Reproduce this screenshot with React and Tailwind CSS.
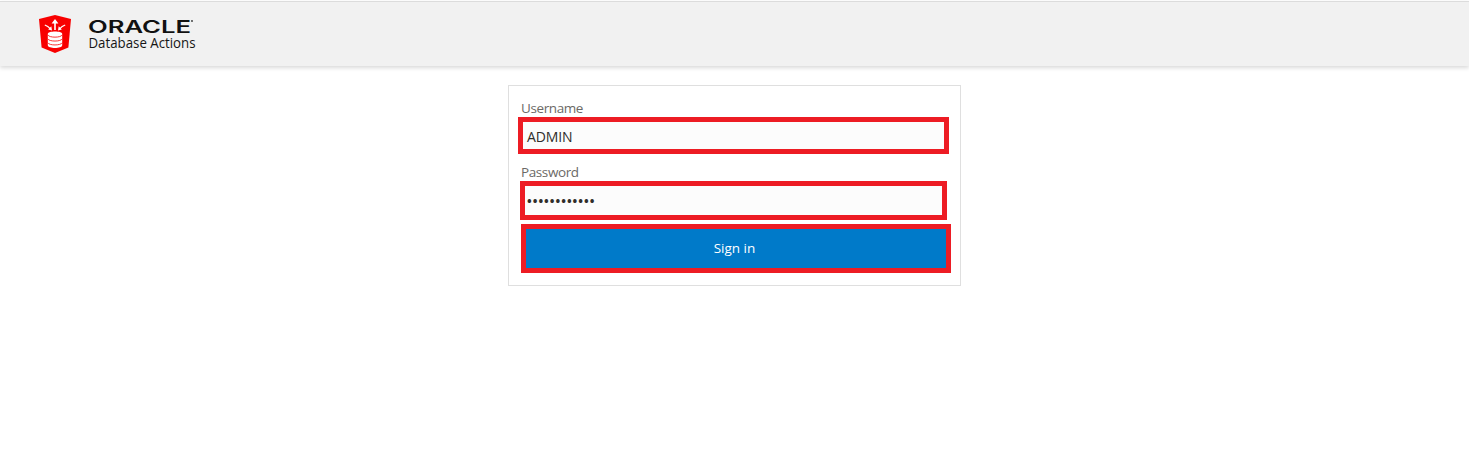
function ShieldLogo() {
  return (
    <svg className="h-10 w-8 shrink-0" viewBox="0 0 32 40" aria-hidden="true">
      <path d="M16 1 L32 5 L29.4 33.6 L16 39 L2.6 33.6 L0 5 Z" fill="#f80000" />
      <g fill="none" stroke="#fff">
        <path d="M16 16 V8" strokeWidth="1.6" />
        <path d="M5.8 11 Q9 12.2 11.4 14.8 M26.2 11 Q23 12.2 20.6 14.8" strokeWidth="1.2" />
      </g>
      <path d="M12.6 9.6 L16 5 L19.4 9.6 Z M13 16.4 L9.2 15.6 L12.3 12.2 Z M19 16.4 L22.8 15.6 L19.7 12.2 Z" fill="#fff" />
      <path d="M8.8 20 C8.8 16.8 23.2 16.8 23.2 20 V31.2 C23.2 34.8 8.8 34.8 8.8 31.2 Z" fill="#fff" />
      <path
        d="M8.8 20.9 C10 23.9 22 23.9 23.2 20.9 M8.8 24.8 C10 27.8 22 27.8 23.2 24.8 M8.8 28.7 C10 31.7 22 31.7 23.2 28.7"
        fill="none"
        stroke="#f80000"
        strokeWidth="0.8"
      />
    </svg>
  );
}

function OracleWordmark() {
  return (
    <svg className="block h-[18px] w-[108px] overflow-visible" viewBox="0 0 108 18" role="img">
      <text
        x="-1"
        y="13.5"
        textLength="103"
        lengthAdjust="spacingAndGlyphs"
        fontFamily="Inter, sans-serif"
        fontSize="17"
        fontWeight="600"
        fill="#111"
      >
        ORACLE
      </text>
      <circle cx="103" cy="2" r="0.9" fill="#333" />
    </svg>
  );
}

export default function App() {
  return (
    <div className="h-[473px] overflow-hidden bg-white pt-px font-['Open_Sans','Noto_Sans',sans-serif] text-sm">
      <header className="flex h-[65px] items-start border-t border-[#dcdcdc] bg-[#f1f1f1] pl-[39px] shadow-[0_2px_4px_rgba(0,0,0,0.15)]">
        <div className="flex pt-3">
          <ShieldLogo />
          <div className="ml-[18px] pt-[5px]">
            <OracleWordmark />
            <svg className="block h-4 w-[108px] overflow-visible" viewBox="0 0 108 16" role="img">
              <text x="-0.5" y="11" textLength="107" lengthAdjust="spacingAndGlyphs" fontSize="14" fill="#161616">
                Database Actions
              </text>
            </svg>
          </div>
        </div>
      </header>
      <main className="mx-auto mt-[19px] h-[201px] w-[453px] border border-[#dfdfdf] pt-3 pl-[9px]">
        <label className="block h-[19px] pl-[3px] text-[13.5px] leading-[20px] tracking-[-0.4px] text-[#6b6966]">
          Username
        </label>
        <div className="flex h-[37px] w-[431px] items-center border-[5px] border-[#ed1c24] bg-[#fcfcfc] pl-1 text-[14px] tracking-[-0.15px] text-[#302d2a]">
          <span className="pt-[3px]">ADMIN</span>
        </div>
        <label className="mt-2 block h-[19px] pl-[3px] text-[13.5px] leading-[20px] tracking-[-0.4px] text-[#6b6966]">
          Password
        </label>
        <div className="ml-[2px] flex h-[39px] w-[427px] items-center border-[5px] border-[#ed1c24] bg-[#fcfcfc] pl-0.5 text-[12.5px] text-[#302d2a]">
          <span className="pt-0.5 font-bold tracking-[1px]">••••••••••••</span>
        </div>
        <button className="mt-1 ml-[3px] flex h-[49px] w-[430px] items-center justify-center border-[5px] border-[#ed1c24] bg-[#007ac9] pr-[3px] text-[13.5px] font-medium text-white">
          Sign in
        </button>
      </main>
    </div>
  );
}
